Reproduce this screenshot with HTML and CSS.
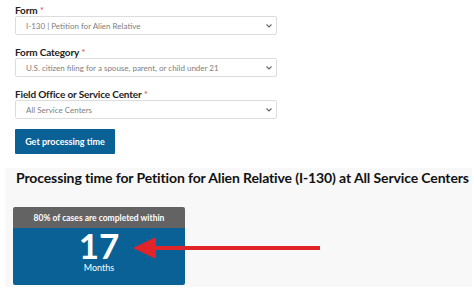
FILE: index.html
```html
<!DOCTYPE html>
<html>
<head>
<meta charset="utf-8">
<link rel="stylesheet" href="styles.css">
</head>
<body>
<div class="form">
  <div class="field">
    <div class="label">Form <span class="req">*</span></div>
    <div class="select"><span>I-130 | Petition for Alien Relative</span><svg class="chev" width="6" height="4" viewBox="0 0 6 4"><polyline points="0.5,0.5 3,3 5.5,0.5" fill="none" stroke="#666" stroke-width="1.1"/></svg></div>
  </div>
  <div class="field">
    <div class="label">Form Category <span class="req">*</span></div>
    <div class="select"><span>U.S. citizen filing for a spouse, parent, or child under 21</span><svg class="chev" width="6" height="4" viewBox="0 0 6 4"><polyline points="0.5,0.5 3,3 5.5,0.5" fill="none" stroke="#666" stroke-width="1.1"/></svg></div>
  </div>
  <div class="field">
    <div class="label">Field Office or Service Center <span class="req">*</span></div>
    <div class="select"><span>All Service Centers</span><svg class="chev" width="6" height="4" viewBox="0 0 6 4"><polyline points="0.5,0.5 3,3 5.5,0.5" fill="none" stroke="#666" stroke-width="1.1"/></svg></div>
  </div>
  <div class="button">Get processing time</div>
</div>
<div class="panel">
  <h2 class="heading">Processing time for Petition for Alien Relative (I-130) at All Service Centers</h2>
  <div class="card">
    <div class="card-head">80% of cases are completed within</div>
    <div class="card-body">
      <div class="num">17</div>
      <div class="unit">Months</div>
    </div>
  </div>
  <svg class="arrow" width="190" height="24" viewBox="0 0 190 24">
    <line x1="18" y1="12" x2="187" y2="12" stroke="#e0242a" stroke-width="4"/>
    <polygon points="0,12 23,1 23,23" fill="#e0242a"/>
  </svg>
</div>
</body>
</html>
```
FILE: styles.css
```css
html, body {
  margin: 0;
  padding: 0;
  background: #ffffff;
  font-family: "Lato", "Liberation Sans", sans-serif;
  overflow: hidden;
}
.form {
  padding: 4px 0 0 15px;
  width: 262px;
}
.field {
  margin-bottom: 11px;
}
.label {
  font-size: 10px;
  letter-spacing: -0.15px;
  line-height: 12px;
  height: 12px;
  font-weight: 700;
  color: #222;
}
.req {
  color: #d9534f;
  font-weight: 400;
}
.select {
  box-sizing: border-box;
  height: 19px;
  border: 1px solid #dddddd;
  border-radius: 2px;
  background: #fff;
  display: flex;
  align-items: center;
  justify-content: space-between;
  padding: 0 4px 0 10px;
  font-size: 8px;
  color: #808080;
}
.chev {
  display: block;
}
.button {
  margin-top: -1px;
  width: 100px;
  height: 25px;
  box-sizing: border-box;
  background: #0a6196;
  color: #fff;
  font-size: 9px;
  font-weight: 700;
  display: flex;
  align-items: center;
  justify-content: center;
  border-radius: 1px;
}
.panel {
  position: relative;
  margin: 14px 2px 0 5px;
  background: #f8f8f8;
  height: 119px;
  padding-top: 1px;
  box-sizing: border-box;
}
.heading {
  margin: 0 0 0 11px;
  font-size: 14px;
  letter-spacing: -0.12px;
  line-height: 18px;
  font-weight: 700;
  color: #111;
  white-space: nowrap;
}
.card {
  margin: 20px 0 0 8px;
  width: 172px;
  border-radius: 2px;
  overflow: hidden;
}
.card-head {
  height: 21px;
  background: #636363;
  color: #fff;
  font-size: 8.5px;
  font-weight: 700;
  display: flex;
  align-items: center;
  justify-content: center;
}
.card-body {
  height: 57px;
  background: #0a6196;
  color: #fff;
  text-align: center;
  box-sizing: border-box;
}
.num {
  font-size: 35px;
  font-weight: 700;
  line-height: 34px;
}
.unit {
  font-size: 9px;
  line-height: 11px;
}
.arrow {
  position: absolute;
  left: 128px;
  top: 68px;
}
```
